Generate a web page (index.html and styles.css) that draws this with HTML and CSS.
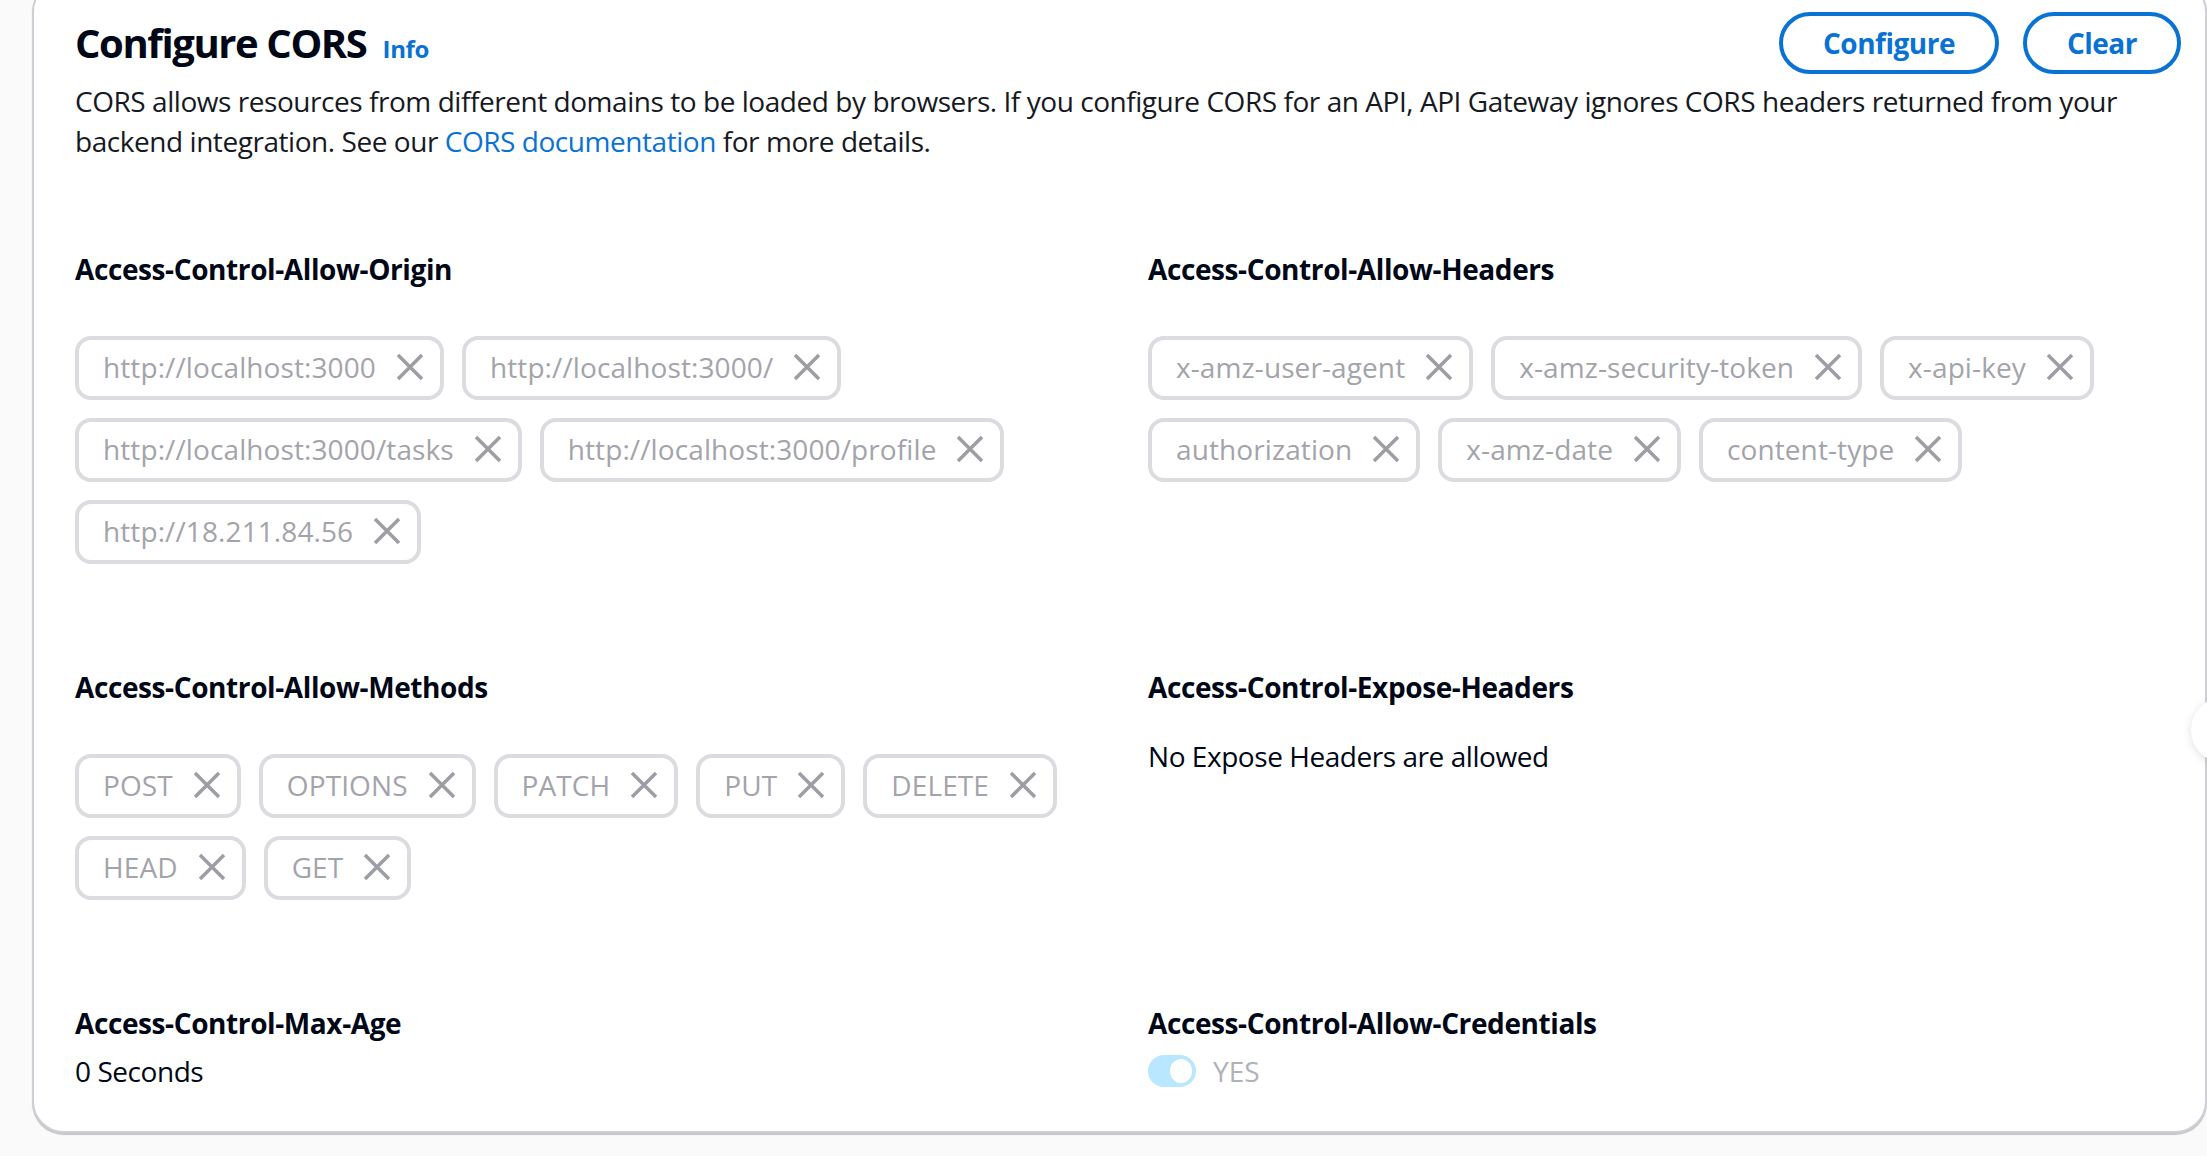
FILE: index.html
```html
<!DOCTYPE html>
<html lang="en">
<head>
<meta charset="utf-8">
<title>Configure CORS</title>
<link rel="stylesheet" href="styles.css">
</head>
<body>
<div class="card">
  <div class="header">
    <div class="header-top">
      <h2 class="title">Configure CORS <a class="info" href="#">Info</a></h2>
      <div class="actions">
        <button class="btn">Configure</button>
        <button class="btn">Clear</button>
      </div>
    </div>
    <p class="desc">CORS allows resources from different domains to be loaded by browsers. If you configure CORS for an API, API Gateway ignores CORS headers returned from your backend integration. See our <a class="link" href="#">CORS documentation</a> for more details.</p>
  </div>

  <div class="grid">
    <div class="field">
      <div class="label">Access-Control-Allow-Origin</div>
      <div class="tokens">
        <span class="token">http://localhost:3000<svg class="x" viewBox="0 0 16 16"><path d="M2 2l12 12M14 2L2 14"/></svg></span>
        <span class="token">http://localhost:3000/<svg class="x" viewBox="0 0 16 16"><path d="M2 2l12 12M14 2L2 14"/></svg></span>
        <span class="token">http://localhost:3000/tasks<svg class="x" viewBox="0 0 16 16"><path d="M2 2l12 12M14 2L2 14"/></svg></span>
        <span class="token">http://localhost:3000/profile<svg class="x" viewBox="0 0 16 16"><path d="M2 2l12 12M14 2L2 14"/></svg></span>
        <span class="token">http://18.211.84.56<svg class="x" viewBox="0 0 16 16"><path d="M2 2l12 12M14 2L2 14"/></svg></span>
      </div>
    </div>
    <div class="field">
      <div class="label">Access-Control-Allow-Headers</div>
      <div class="tokens">
        <span class="token">x-amz-user-agent<svg class="x" viewBox="0 0 16 16"><path d="M2 2l12 12M14 2L2 14"/></svg></span>
        <span class="token">x-amz-security-token<svg class="x" viewBox="0 0 16 16"><path d="M2 2l12 12M14 2L2 14"/></svg></span>
        <span class="token">x-api-key<svg class="x" viewBox="0 0 16 16"><path d="M2 2l12 12M14 2L2 14"/></svg></span>
        <span class="token">authorization<svg class="x" viewBox="0 0 16 16"><path d="M2 2l12 12M14 2L2 14"/></svg></span>
        <span class="token">x-amz-date<svg class="x" viewBox="0 0 16 16"><path d="M2 2l12 12M14 2L2 14"/></svg></span>
        <span class="token">content-type<svg class="x" viewBox="0 0 16 16"><path d="M2 2l12 12M14 2L2 14"/></svg></span>
      </div>
    </div>
    <div class="field">
      <div class="label">Access-Control-Allow-Methods</div>
      <div class="tokens">
        <span class="token">POST<svg class="x" viewBox="0 0 16 16"><path d="M2 2l12 12M14 2L2 14"/></svg></span>
        <span class="token">OPTIONS<svg class="x" viewBox="0 0 16 16"><path d="M2 2l12 12M14 2L2 14"/></svg></span>
        <span class="token">PATCH<svg class="x" viewBox="0 0 16 16"><path d="M2 2l12 12M14 2L2 14"/></svg></span>
        <span class="token">PUT<svg class="x" viewBox="0 0 16 16"><path d="M2 2l12 12M14 2L2 14"/></svg></span>
        <span class="token">DELETE<svg class="x" viewBox="0 0 16 16"><path d="M2 2l12 12M14 2L2 14"/></svg></span>
        <span class="token">HEAD<svg class="x" viewBox="0 0 16 16"><path d="M2 2l12 12M14 2L2 14"/></svg></span>
        <span class="token">GET<svg class="x" viewBox="0 0 16 16"><path d="M2 2l12 12M14 2L2 14"/></svg></span>
      </div>
    </div>
    <div class="field">
      <div class="label">Access-Control-Expose-Headers</div>
      <div class="value value-far">No Expose Headers are allowed</div>
    </div>
    <div class="field">
      <div class="label">Access-Control-Max-Age</div>
      <div class="value">0 Seconds</div>
    </div>
    <div class="field">
      <div class="label">Access-Control-Allow-Credentials</div>
      <div class="toggle-row">
        <span class="toggle"><span class="knob"></span></span>
        <span class="toggle-label">YES</span>
      </div>
    </div>
  </div>
</div>
<div class="float-btn"></div>
</body>
</html>
```

FILE: styles.css
```css
html, body {
  margin: 0;
  padding: 0;
}
body {
  background: #fafafa;
  font-family: "Open Sans", "Noto Sans", Arial, sans-serif;
  color: #16191f;
  overflow: hidden;
  width: 2207px;
  height: 1156px;
}
.card {
  box-sizing: border-box;
  margin: -20px 0 0 32px;
  width: 2175px;
  background: #ffffff;
  border: 2px solid #cfcfd5;
  border-radius: 32px;
  box-shadow: 0 2px 1px rgba(0, 7, 22, 0.22);
  padding: 30px 24px 40px 41px;
}
.header-top {
  display: flex;
  justify-content: space-between;
  align-items: center;
  height: 62px;
}
.title {
  margin: 6px 0 0;
  font-size: 40px;
  line-height: 48px;
  font-weight: 700;
  color: #000716;
  display: flex;
  align-items: baseline;
  letter-spacing: -1.4px;
}
.info {
  margin-left: 16px;
  font-size: 24px;
  font-weight: 700;
  color: #0972d3;
  text-decoration: none;
  letter-spacing: -0.3px;
}
.actions {
  display: flex;
  gap: 24px;
}
.btn {
  font-family: inherit;
  font-size: 28px;
  font-weight: 700;
  line-height: 40px;
  letter-spacing: -0.5px;
  color: #0972d3;
  background: #ffffff;
  border: 4px solid #0972d3;
  border-radius: 40px;
  padding: 7px 40px;
  cursor: pointer;
}
.desc {
  margin: 7px 0 0;
  font-size: 28px;
  line-height: 40px;
  letter-spacing: -0.45px;
  color: #16191f;
}
.link {
  color: #0972d3;
  text-decoration: none;
}
.grid {
  margin-top: 88px;
  display: grid;
  grid-template-columns: 1fr 1fr;
  column-gap: 40px;
  row-gap: 103px;
}
.label {
  font-size: 28px;
  line-height: 40px;
  font-weight: 700;
  color: #000716;
  letter-spacing: -0.4px;
}
.tokens {
  margin-top: 47px;
  display: flex;
  flex-wrap: wrap;
  gap: 18px;
}
.token {
  display: inline-flex;
  align-items: center;
  box-sizing: border-box;
  height: 64px;
  border: 4px solid #dcdce0;
  border-radius: 16px;
  padding: 0 14px 2px 24px;
  font-size: 28px;
  line-height: 40px;
  letter-spacing: 0.1px;
  color: #a3a4ab;
}
.x {
  width: 32px;
  height: 32px;
  margin-left: 18px;
  fill: none;
  stroke: #9d9ea5;
  stroke-width: 1.75;
}
.value {
  margin-top: 8px;
  font-size: 28px;
  line-height: 40px;
  letter-spacing: -0.45px;
  color: #000716;
}
.value-far {
  margin-top: 29px;
}
.toggle-row {
  margin-top: 8px;
  height: 40px;
  display: flex;
  align-items: center;
}
.toggle {
  box-sizing: border-box;
  width: 48px;
  height: 32px;
  border-radius: 16px;
  background: #b8e7ff;
  display: flex;
  align-items: center;
  justify-content: flex-end;
  padding: 0 4px;
}
.knob {
  width: 22px;
  height: 24px;
  border-radius: 50%;
  background: #ffffff;
}
.toggle-label {
  margin-left: 17px;
  font-size: 28px;
  line-height: 40px;
  color: #b1b2b9;
}
.float-btn {
  position: fixed;
  left: 2191px;
  top: 697px;
  width: 66px;
  height: 66px;
  border-radius: 50%;
  background: #ffffff;
  box-shadow: 0 2px 10px rgba(0, 7, 22, 0.12);
}
```
